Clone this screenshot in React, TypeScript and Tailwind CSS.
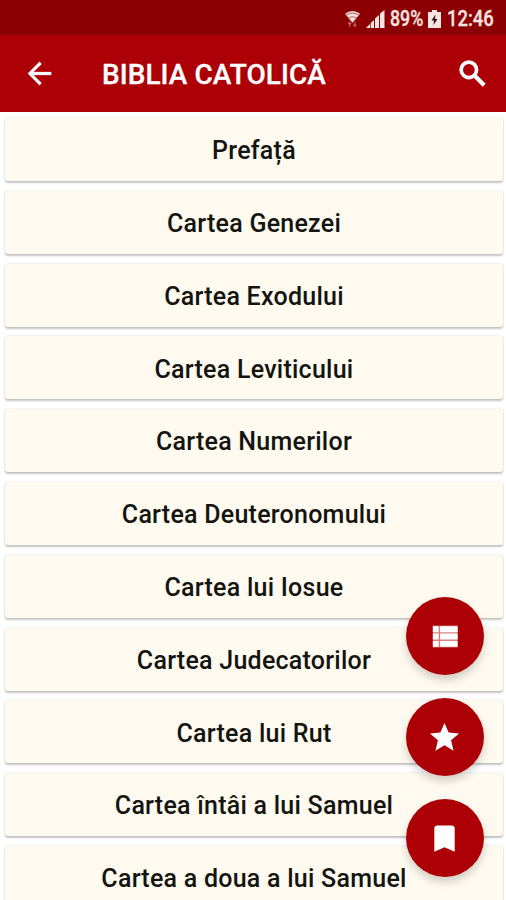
import { MdBookmark, MdStar } from "react-icons/md";

const books = [
  "Prefață",
  "Cartea Genezei",
  "Cartea Exodului",
  "Cartea Leviticului",
  "Cartea Numerilor",
  "Cartea Deuteronomului",
  "Cartea lui Iosue",
  "Cartea Judecatorilor",
  "Cartea lui Rut",
  "Cartea întâi a lui Samuel",
  "Cartea a doua a lui Samuel",
];

function BackIcon() {
  return (
    <svg width="35" height="35" viewBox="0 0 24 24" fill="currentColor" stroke="currentColor" strokeWidth="0.2">
      <path d="M20 11H7.830l5.590-5.590L12 4l-8 8 8 8 1.410-1.410L7.830 13H20v-2z" />
    </svg>
  );
}

function SearchIcon() {
  return (
    <svg width="35" height="35" viewBox="0 0 24 24" fill="none" stroke="currentColor" strokeWidth="2.500">
      <circle cx="9.500" cy="9.500" r="5.300" />
      <path d="M13.500 13.500L20 20" strokeWidth="2.900" />
    </svg>
  );
}

function ListIcon({ size }: { size: number }) {
  return (
    <svg width={size} height={size} viewBox="0 0 24 24" fill="currentColor">
      <path d="M4 14h4v-4H4v4zm0 5h4v-4H4v4zM4 9h4V5H4v4zm5 5h12v-4H9v4zm0 5h12v-4H9v4zM9 5v4h12V5H9z" />
      <path d="M4 4.500H21V19.500H4Z" opacity="0.5" />
    </svg>
  );
}

const actions = [
  { id: "list", label: "Cuprins", Icon: ListIcon },
  { id: "favorites", label: "Favorite", Icon: MdStar },
  { id: "bookmarks", label: "Semne de carte", Icon: MdBookmark },
];

function StatusBar() {
  return (
    <div className="flex h-[35px] shrink-0 items-center justify-end bg-[#8c0004] pt-[2px] pr-[12px] text-[22.5px] leading-none font-medium text-[#f8e4e0]">
      <svg width="17" height="20" viewBox="0 0 18 20" className="mr-[5px]">
        <path d="M1 4.5Q9 -1.5 17 4.5L9 14Z" fill="#f4dcd8" />
        <path d="M2 6Q9 1.5 16 6M4.5 9Q9 6 13.5 9" fill="none" stroke="#a4504c" strokeWidth="0.9" />
        <path d="M6 18.5V13.500M4.500 15.500L6 13.500L7.500 15.500M11.500 13V18M10 16L11.500 18L13 16" fill="none" stroke="#bd605c" strokeWidth="1.300" />
      </svg>
      <svg width="19" height="18" viewBox="0 0 19 18" className="mr-[5px]" fill="#f8e4e0">
        <path d="M0 18L4 14V18ZM4.700 13L8 10V18H4.700ZM9 8.500L13 5V18H9ZM14 3.500L18.500 0V18H14Z" />
      </svg>
      <span className="w-[34px] whitespace-nowrap">
        <span className="inline-block origin-left scale-x-[0.79] [-webkit-text-stroke:0.3px_#f8e4e0]">89%</span>
      </span>
      <svg width="13" height="18" viewBox="0 0 13 18" className="mr-[6px] ml-[4px]">
        <path d="M4 0H9V2H13V18H0V2H4Z" fill="#f8e4e0" />
        <path d="M7.500 4.500L3.500 10.500H6L5.500 15L9.500 9H7Z" fill="#2c1010" />
      </svg>
      <span className="w-[47px] whitespace-nowrap">
        <span className="inline-block origin-left scale-x-[0.82] [-webkit-text-stroke:0.3px_#f8e4e0]">12:46</span>
      </span>
    </div>
  );
}

export default function App() {
  return (
    <div className="relative flex h-[900px] w-[506px] flex-col overflow-hidden bg-white font-[Roboto,sans-serif]">
      <StatusBar />

      <header className="flex h-[77px] shrink-0 items-center bg-[#ad0006] px-[22px] text-white">
        <button aria-label="Înapoi">
          <BackIcon />
        </button>
        <h1 className="ml-[45px] grow pt-[3px] text-[28px] leading-none font-medium tracking-[0.05px] whitespace-nowrap [-webkit-text-stroke:0.3px_white]">
          BIBLIA CATOLICĂ
        </h1>
        <button aria-label="Caută" className="-mr-[6px]">
          <SearchIcon />
        </button>
      </header>

      <main className="flex flex-col gap-[9.8px] pt-[6px] pr-[3px] pl-[5px]">
        {books.map((book) => (
          <div
            key={book}
            className="flex h-[63px] shrink-0 items-center justify-center rounded-[3px] bg-[#fefaef] pt-[3px] text-[25px] font-medium tracking-[0.25px] text-[#141410] shadow-[0_1.5px_2px_rgba(0,0,0,0.22),0_0_2px_rgba(0,0,0,0.12)]"
          >
            {book}
          </div>
        ))}
      </main>

      <div className="absolute top-[597px] right-[22px] flex flex-col gap-[23px]">
        {actions.map(({ id, label, Icon }) => (
          <button
            key={id}
            aria-label={label}
            className="flex size-[78px] items-center justify-center rounded-full bg-[#ad0006] pr-px text-white shadow-[0_5px_9px_rgba(0,0,0,0.18)]"
          >
            <Icon size={35} />
          </button>
        ))}
      </div>
    </div>
  );
}
